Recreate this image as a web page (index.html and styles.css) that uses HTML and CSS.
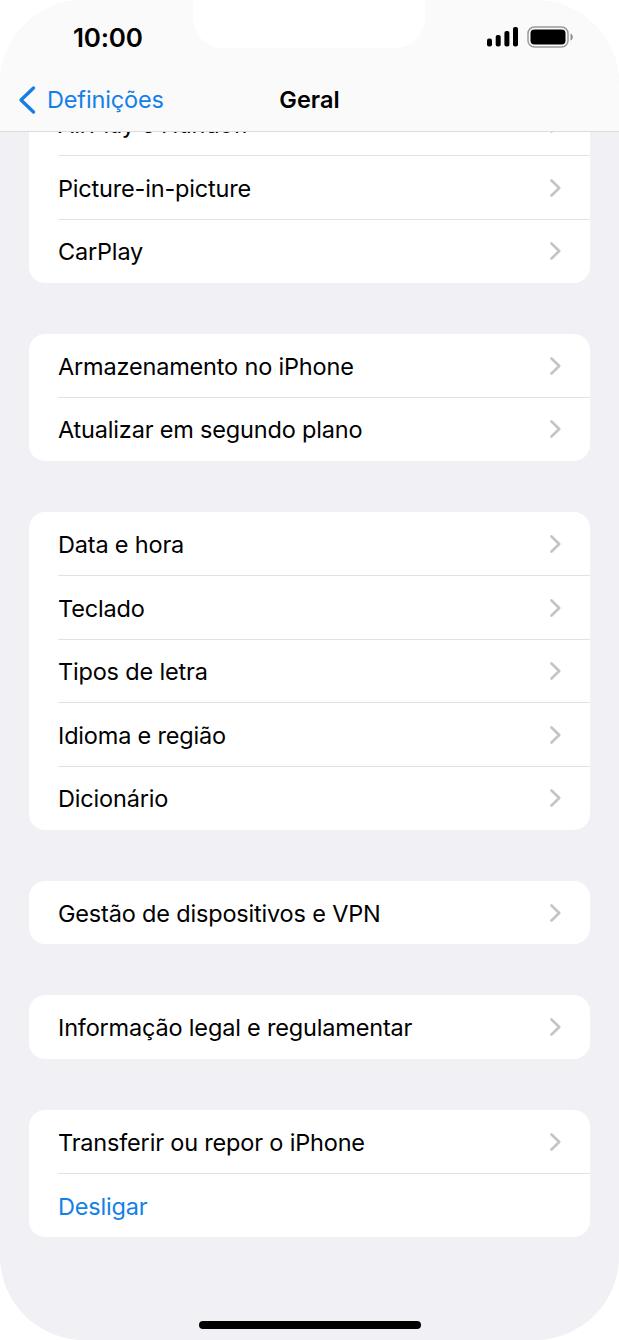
FILE: index.html
```html
<!DOCTYPE html>
<html lang="pt">
<head>
<meta charset="utf-8">
<title>Geral</title>
<link rel="stylesheet" href="styles.css">
</head>
<body>
<div class="phone">
  <header class="top">
    <div class="status">
      <span class="time">10:00</span>
      <div class="status-icons">
        <svg class="signal" width="31" height="20" viewBox="0 0 31 20"><rect x="0" y="11.500" width="5" height="8" rx="2"/><rect x="8.700" y="8" width="5" height="11.500" rx="2"/><rect x="17.400" y="4" width="5" height="15.500" rx="2"/><rect x="26" y="0" width="5" height="19.500" rx="2"/></svg>
        <svg class="battery" width="46" height="22" viewBox="0 0 46 22"><rect x="1" y="1" width="40" height="20" rx="6.500" fill="none" stroke="#9a9a9a" stroke-width="1.500"/><rect x="3.500" y="3.500" width="35" height="15" rx="4"/><path d="M43.500 7.500c1.500.5 2.300 2 2.300 3.500s-.8 3-2.300 3.500z" fill="#8e8e8e"/></svg>
      </div>
    </div>
    <nav class="nav">
      <a class="back">
        <svg width="20" height="30" viewBox="0 0 20 30"><path d="M16.500 3 4 15l12.500 12" fill="none" stroke="#157fe8" stroke-width="3.400" stroke-linecap="round" stroke-linejoin="round"/></svg>
        <span>Definições</span>
      </a>
      <h1>Geral</h1>
    </nav>
  </header>
  <div class="notch"></div>
  <main class="list">
    <section class="card">
      <div class="row"><span>AirPlay e Handoff</span><svg class="chev" viewBox="0 0 11 18"><path d="M1.500 1.500 9.200 9l-7.700 7.500"/></svg></div>
      <div class="row"><span>Picture-in-picture</span><svg class="chev" viewBox="0 0 11 18"><path d="M1.500 1.500 9.200 9l-7.700 7.500"/></svg></div>
      <div class="row"><span>CarPlay</span><svg class="chev" viewBox="0 0 11 18"><path d="M1.500 1.500 9.200 9l-7.700 7.500"/></svg></div>
    </section>
    <section class="card">
      <div class="row"><span>Armazenamento no iPhone</span><svg class="chev" viewBox="0 0 11 18"><path d="M1.500 1.500 9.200 9l-7.700 7.500"/></svg></div>
      <div class="row"><span>Atualizar em segundo plano</span><svg class="chev" viewBox="0 0 11 18"><path d="M1.500 1.500 9.200 9l-7.700 7.500"/></svg></div>
    </section>
    <section class="card">
      <div class="row"><span>Data e hora</span><svg class="chev" viewBox="0 0 11 18"><path d="M1.500 1.500 9.200 9l-7.700 7.500"/></svg></div>
      <div class="row"><span>Teclado</span><svg class="chev" viewBox="0 0 11 18"><path d="M1.500 1.500 9.200 9l-7.700 7.500"/></svg></div>
      <div class="row"><span>Tipos de letra</span><svg class="chev" viewBox="0 0 11 18"><path d="M1.500 1.500 9.200 9l-7.700 7.500"/></svg></div>
      <div class="row"><span>Idioma e região</span><svg class="chev" viewBox="0 0 11 18"><path d="M1.500 1.500 9.200 9l-7.700 7.500"/></svg></div>
      <div class="row"><span>Dicionário</span><svg class="chev" viewBox="0 0 11 18"><path d="M1.500 1.500 9.200 9l-7.700 7.500"/></svg></div>
    </section>
    <section class="card">
      <div class="row"><span>Gestão de dispositivos e VPN</span><svg class="chev" viewBox="0 0 11 18"><path d="M1.500 1.500 9.200 9l-7.700 7.500"/></svg></div>
    </section>
    <section class="card">
      <div class="row"><span>Informação legal e regulamentar</span><svg class="chev" viewBox="0 0 11 18"><path d="M1.500 1.500 9.200 9l-7.700 7.500"/></svg></div>
    </section>
    <section class="card">
      <div class="row"><span>Transferir ou repor o iPhone</span><svg class="chev" viewBox="0 0 11 18"><path d="M1.500 1.500 9.200 9l-7.700 7.500"/></svg></div>
      <div class="row link"><span>Desligar</span></div>
    </section>
  </main>
  <div class="home"></div>
</div>
</body>
</html>
```
FILE: styles.css
```css
* { box-sizing: border-box; }
html, body { margin: 0; padding: 0; background: #fff; }
body { width: 619px; height: 1340px; overflow: hidden; font-family: Inter, "Noto Sans", sans-serif; }
.phone { position: relative; width: 619px; height: 1340px; background: #f0f0f5; border-radius: 84px; overflow: hidden; }
.top { position: absolute; top: 0; left: 0; right: 0; height: 132px; background: #fafafa; border-bottom: 1px solid #dcdcdc; z-index: 2; }
.status { display: flex; justify-content: space-between; align-items: center; height: 74px; padding: 0 46px 0 73px; }
.time { font-size: 26px; font-weight: 600; color: #000; letter-spacing: -0.200px; }
.status-icons { display: flex; align-items: center; gap: 9px; }
.signal, .battery { display: block; }
.nav { position: relative; display: flex; justify-content: center; align-items: center; height: 51px; }
.nav h1 { margin: 0; font-size: 23.500px; font-weight: 600; color: #000; }
.back { position: absolute; left: 17px; top: 0; height: 51px; display: flex; align-items: center; gap: 10px; color: #157fe8; font-size: 23.500px; letter-spacing: -0.150px; white-space: nowrap; }
.back svg { display: block; }
.notch { position: absolute; top: 0; left: 193px; width: 232px; height: 48px; background: #fff; border-radius: 0 0 30px 30px; z-index: 3; }
.list { display: flex; flex-direction: column; gap: 50.950px; padding: 91.850px 29px 0; }
.card { background: #fff; border-radius: 16px; overflow: hidden; }
.row { position: relative; display: flex; align-items: center; justify-content: space-between; height: 63.600px; padding: 2px 29px 0; font-size: 23.500px; letter-spacing: -0.180px; color: #000; }
.row + .row::before { content: ""; position: absolute; top: 0; left: 29px; right: 0; height: 1px; background: #e2e2e4; }
.link { color: #157fe8; }
.chev { width: 11px; height: 18px; display: block; fill: none; stroke: #c4c4c7; stroke-width: 2.600; stroke-linecap: round; stroke-linejoin: round; margin-top: -1px; }
.home { position: absolute; left: 199px; bottom: 11px; width: 222px; height: 8px; border-radius: 4px; background: #000; }
```
